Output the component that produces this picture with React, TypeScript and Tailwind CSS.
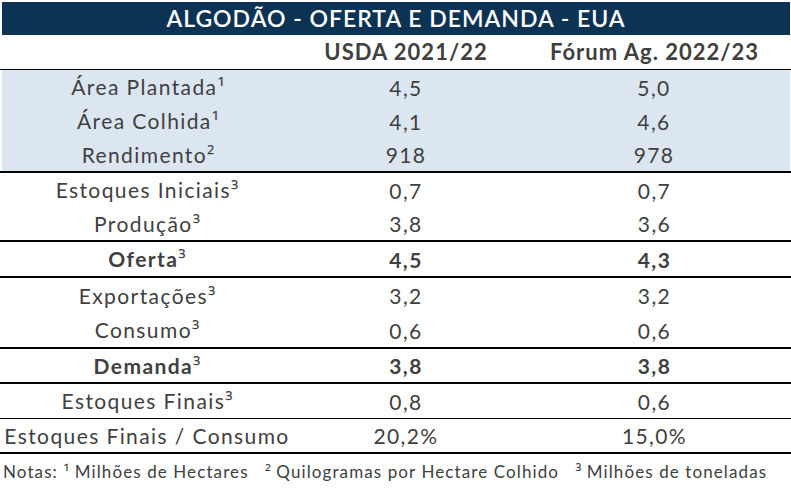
import React from 'react';

type Row = {
  label: string;
  sup?: string;
  usda: string;
  forum: string;
  h: string;
  bold?: boolean;
  shaded?: boolean;
};

const rows: (Row | 'thick' | 'thin')[] = [
  'thin',
  { label: 'Área Plantada', sup: '¹', usda: '4,5', forum: '5,0', h: 'h-[34px]', shaded: true },
  { label: 'Área Colhida', sup: '¹', usda: '4,1', forum: '4,6', h: 'h-[34px]', shaded: true },
  { label: 'Rendimento', sup: '²', usda: '918', forum: '978', h: 'h-[33px]', shaded: true },
  'thick',
  { label: 'Estoques Iniciais', sup: '³', usda: '0,7', forum: '0,7', h: 'h-[34px]' },
  { label: 'Produção', sup: '³', usda: '3,8', forum: '3,6', h: 'h-[33px]' },
  'thick',
  { label: 'Oferta', sup: '³', usda: '4,5', forum: '4,3', h: 'h-[34px]', bold: true },
  'thick',
  { label: 'Exportações', sup: '³', usda: '3,2', forum: '3,2', h: 'h-[35px]' },
  { label: 'Consumo', sup: '³', usda: '0,6', forum: '0,6', h: 'h-[34px]' },
  'thick',
  { label: 'Demanda', sup: '³', usda: '3,8', forum: '3,8', h: 'h-[33px]', bold: true },
  'thick',
  { label: 'Estoques Finais', sup: '³', usda: '0,8', forum: '0,6', h: 'h-[34px]' },
  'thin',
  { label: 'Estoques Finais / Consumo', usda: '20,2%', forum: '15,0%', h: 'h-[33px]' },
  'thick',
];

function Sup({ c }: { c: string }) {
  return <span className="font-['Open_Sans',sans-serif] font-normal tracking-normal">{c}</span>;
}

function DataRow({ row }: { row: Row }) {
  return (
    <div
      className={`flex items-center ${row.h} ${row.shaded ? 'bg-[#dce6f1] ml-[2px] mr-[1px]' : ''} ${
        row.bold ? 'font-bold' : ''
      }`}
    >
      <div className={`${row.shaded ? 'w-[292px]' : 'w-[294px]'} text-center whitespace-nowrap`}>
        {row.label}
        {row.sup && <Sup c={row.sup} />}
      </div>
      <div className="w-[224px] text-center">{row.usda}</div>
      <div className="flex-1 text-center">{row.forum}</div>
    </div>
  );
}

export default function App() {
  return (
    <div className="w-[791px] h-[489px] bg-white text-[#404040] text-[21px] tracking-[1.4px] leading-none font-['Lato',sans-serif] overflow-hidden">
      <div className="mt-[2px] ml-[2px] mr-[1px] h-[33px] bg-[#0c3254] flex items-center justify-center text-white text-[23px] tracking-[1px] font-semibold">
        ALGODÃO - OFERTA E DEMANDA - EUA
      </div>
      <div className="flex items-center h-[34px] font-bold text-[22px] tracking-[1px]">
        <div className="w-[294px]" />
        <div className="w-[224px] text-center">USDA 2021/22</div>
        <div className="flex-1 text-center">Fórum Ag. 2022/23</div>
      </div>
      {rows.map((r, i) =>
        r === 'thick' ? (
          <div key={i} className="h-[2px] bg-black" />
        ) : r === 'thin' ? (
          <div key={i} className="h-px bg-black" />
        ) : (
          <DataRow key={i} row={r} />
        )
      )}
      <div className="pl-[3px] pt-[9px] text-[17px] tracking-[1.1px] whitespace-pre">
        Notas: <Sup c="¹" /> Milhões de Hectares   <Sup c="²" /> Quilogramas por Hectare Colhido   <Sup c="³" /> Milhões
        de toneladas
      </div>
    </div>
  );
}
